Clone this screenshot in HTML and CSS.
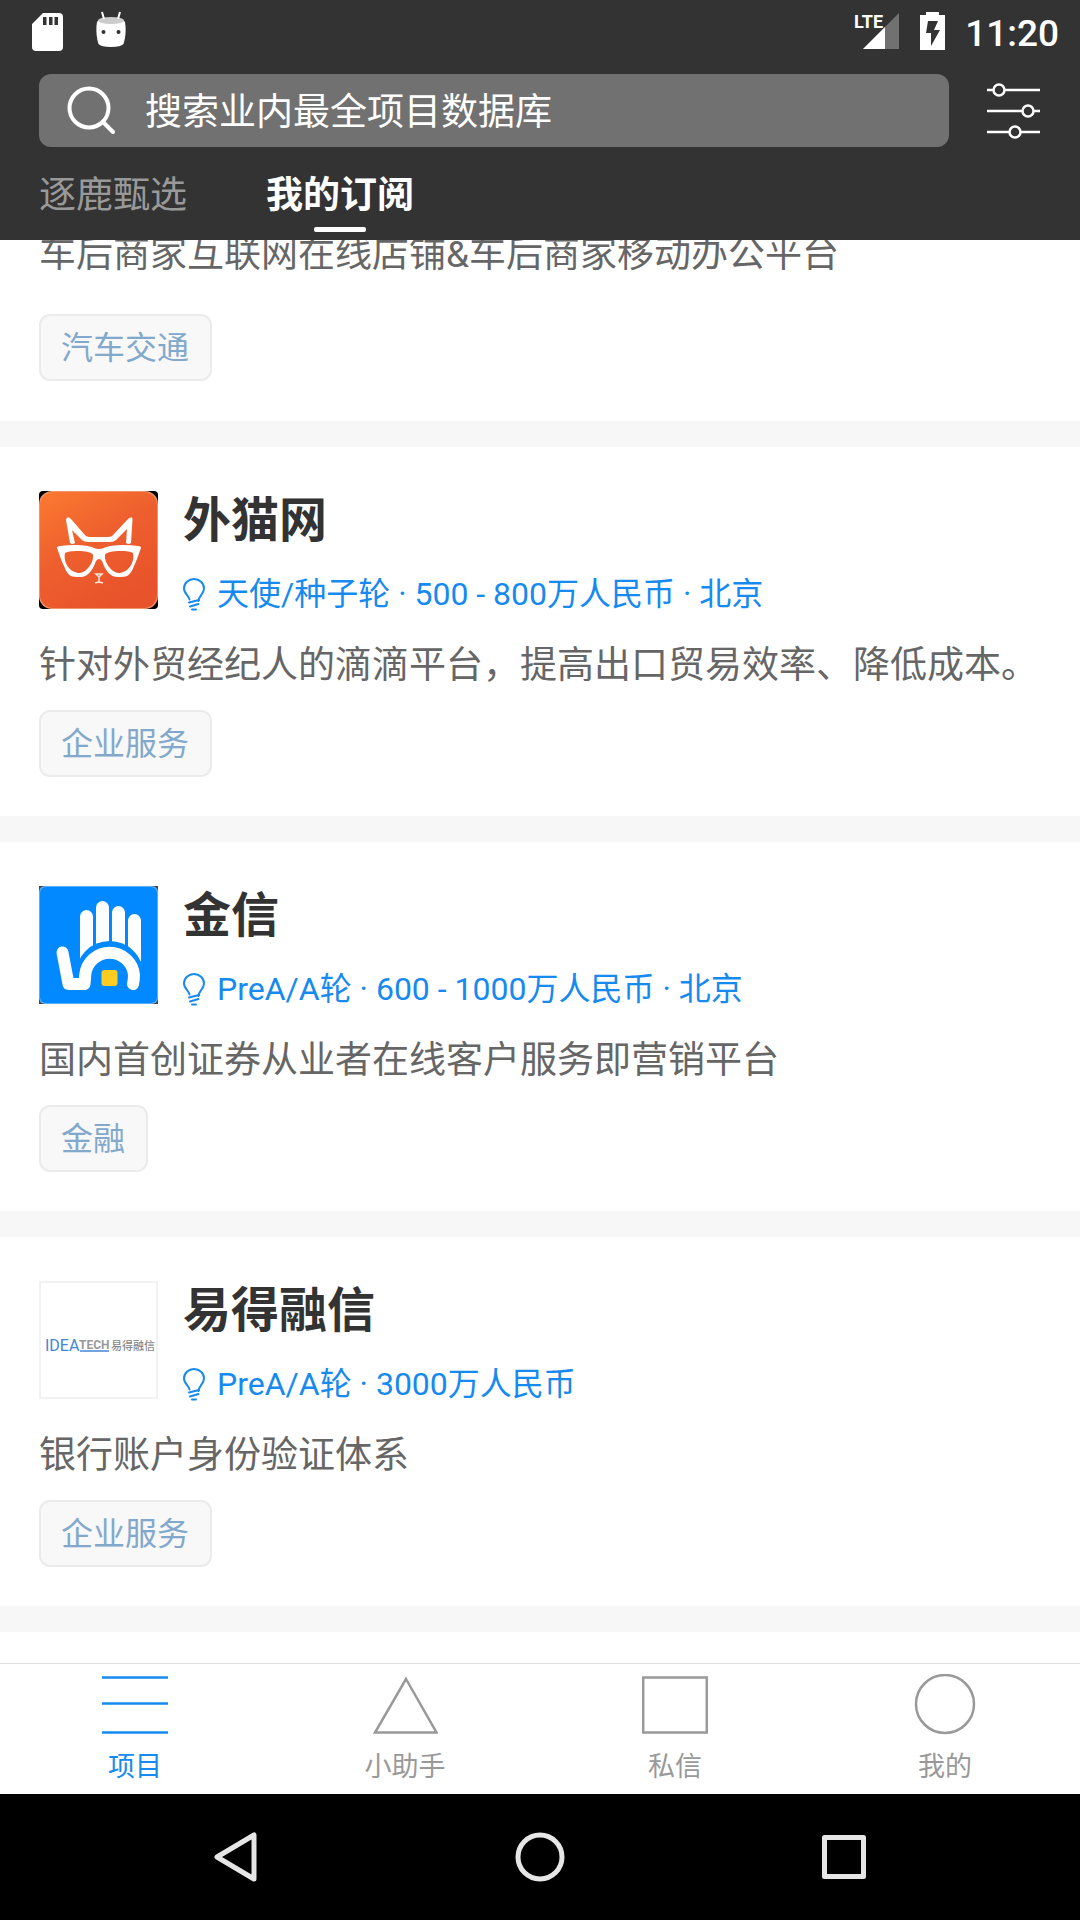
FILE: index.html
```html
<!DOCTYPE html>
<html lang="zh-CN">
<head>
<meta charset="utf-8">
<meta name="viewport" content="width=device-width, initial-scale=1">
<title>我的订阅</title>
<link rel="stylesheet" href="styles.css">
</head>
<body>
<svg class="defs" aria-hidden="true">
  <symbol id="bulb" viewBox="0 0 22 33">
    <g fill="none" stroke="currentColor" stroke-width="2" stroke-linecap="round">
      <path d="M6.500 21.500C6.500 18 1 16 1 10.500A10 9.500 0 0 1 21 10.500C21 16 15.500 18 15.500 23"/>
      <path d="M6 24.500L16 22M7 28.500L15.500 26M9 31.500H13"/>
    </g>
  </symbol>
</svg>
<div class="app">
  <header class="header">
    <div class="status">
      <div class="status-side status-left">
        <svg width="32" height="40" viewBox="0 0 32 40"><path fill="#fff" fill-rule="evenodd" d="M12 2H28a4 4 0 0 1 4 4V36a4 4 0 0 1-4 4H5a4 4 0 0 1-4-4V13ZM12 6V14H15.500V6ZM18 6V14H21.500V6ZM23.500 6V14H27V6Z"/></svg>
        <svg width="32" height="38" viewBox="0 0 32 38"><path fill="#fff" d="M2 11C1 17 1 25 3.500 33Q6 36 16 36T28.500 33C31 25 31 17 30 11Q28 7 16 7T2 11Z"/><ellipse cx="16" cy="9.500" rx="13" ry="3.500" fill="#ccc"/><path d="M7 1L9 8M25 1L23 8" stroke="#fff" stroke-width="2"/><circle cx="8.500" cy="21" r="2" fill="#333"/><circle cx="23.500" cy="21" r="2" fill="#333"/></svg>
      </div>
      <div class="status-side status-right">
        <svg width="47" height="40" viewBox="0 0 47 40"><path fill="#717171" d="M46 2V38H10Z"/><path fill="#fff" d="M32 16V38H10Z"/><text x="1" y="17" class="lte">LTE</text></svg>
        <svg width="25" height="40" viewBox="0 0 25 40"><path fill="#fff" fill-rule="evenodd" d="M6 1H19V4H25V39H0V4H6ZM8 10L6 22H11V35L20 19H14L18 10Z"/></svg>
        <time class="clock">11:20</time>
      </div>
    </div>
    <form class="search-row" onsubmit="return false">
      <label class="search">
        <svg width="50" height="50" viewBox="0 0 50 50"><g fill="none" stroke="#fff" stroke-width="4" stroke-linecap="round"><circle cx="23" cy="22" r="19.500"/><path d="M37 36L47 46"/></g></svg>
        <input type="search" placeholder="搜索业内最全项目数据库" aria-label="搜索项目">
      </label>
      <button type="button" class="filter" aria-label="筛选">
        <svg width="54" height="56" viewBox="0 0 54 56"><g fill="#333" stroke="#fff" stroke-width="2.500"><path d="M0 7H53M0 28H53M0 49H53"/><circle cx="12" cy="7" r="5.500"/><circle cx="41" cy="28" r="5.500"/><circle cx="28" cy="49" r="5.500"/></g></svg>
      </button>
    </form>
    <nav class="tabs">
      <button type="button" class="tab">逐鹿甄选</button>
      <button type="button" class="tab tab-active">我的订阅</button>
    </nav>
  </header>

  <main class="feed">
    <article class="card card-scrolled">
      <p class="desc">车后商家互联网在线店铺&amp;车后商家移动办公平台</p>
      <span class="tag">汽车交通</span>
    </article>

    <article class="card">
      <div class="card-head">
        <svg class="logo" viewBox="0 0 119 118">
          <defs><linearGradient id="orange" x1="0" y1="0" x2=".6" y2="1"><stop offset="0" stop-color="#fb7a30"/><stop offset=".5" stop-color="#ee5f2e"/><stop offset="1" stop-color="#e8532b"/></linearGradient></defs>
          <rect width="119" height="118" rx="4" fill="#000"/>
          <rect width="119" height="118" rx="13" fill="#f0946c"/>
          <rect x="1" y="1" width="117" height="116" rx="13" fill="url(#orange)"/>
          <path fill="#fff" fill-rule="evenodd" d="M31 52L27 29Q28 24 32 28L45 43Q47 46 51 46H69Q73 46 75 43L89 28Q94 24 93.500 29L92 52Q89.500 54 87 52L88 38L77 49Q75 51 71 51H49Q45 51 43 49L33 39L36 52Q33.500 54 31 52Z"/>
          <path fill="#fff" fill-rule="evenodd" d="M18 57Q18 55 21 55C34 53 50 54 55 57Q60 59 65 57C70 54 86 53 99 55Q102 55 102 57C99 65 98 69 95 75C91 86 87 86 79 86C70 86 66 78 63 70Q60 66 57 70C54 78 50 86 41 86C33 86 29 86 25 75C22 69 21 65 18 57ZM26 62C24 72 31 82 41 82C48 81 55 71 54 64C53 59 30 59 26 62ZM94 62C96 72 89 82 79 82C72 81 65 71 66 64C67 59 90 59 94 62Z"/>
          <path fill="none" stroke="#ffe6dc" stroke-width="1.500" d="M57 83L60 86L63 83ZM60 86V91M56 92L60 91L64 92"/>
        </svg>
        <div class="card-info">
          <h2 class="name">外猫网</h2>
          <p class="meta"><svg class="bulb"><use href="#bulb"/></svg>天使/种子轮 · 500 - 800万人民币 · 北京</p>
        </div>
      </div>
      <p class="desc">针对外贸经纪人的滴滴平台，提高出口贸易效率、降低成本。</p>
      <span class="tag">企业服务</span>
    </article>

    <article class="card">
      <div class="card-head">
        <svg class="logo" viewBox="0 0 119 118">
          <rect width="119" height="118" fill="#444"/>
          <rect width="119" height="118" rx="6" fill="#5aaef8"/>
          <rect x="1" y="1" width="117" height="116" rx="6" fill="#0389ff"/>
          <g fill="#fff"><rect x="41" y="24" width="13" height="55" rx="6.500"/><rect x="57" y="15" width="13" height="60" rx="6.500"/><rect x="73" y="20" width="13" height="60" rx="6.500"/><path d="M89 34.500a6.500 6.500 0 0 1 13 0V76L89 70Z"/></g>
          <path fill="#0389ff" d="M36.600 89a34 34 0 0 1 68 0v18h-68Z"/>
          <path fill="none" stroke="#fff" stroke-width="12" stroke-linecap="round" stroke-linejoin="round" d="M23.500 66.500L29.500 98H45.500Q46 94 46.200 89A24.500 24.500 0 0 1 95 89Q95 94 94 98"/>
          <rect x="62.500" y="84" width="16" height="16" rx="3" fill="#fccc20"/>
        </svg>
        <div class="card-info">
          <h2 class="name">金信</h2>
          <p class="meta"><svg class="bulb"><use href="#bulb"/></svg>PreA/A轮 · 600 - 1000万人民币 · 北京</p>
        </div>
      </div>
      <p class="desc">国内首创证券从业者在线客户服务即营销平台</p>
      <span class="tag">金融</span>
    </article>

    <article class="card">
      <div class="card-head">
        <svg class="logo" viewBox="0 0 119 118">
          <rect x="1" y="1" width="117" height="116" fill="#fff" stroke="#f2f2f2" stroke-width="2"/>
          <text x="6" y="70" class="brand-idea">IDEA</text>
          <text x="40" y="68" class="brand-tech">TECH</text>
          <path d="M41 70H70" stroke="#4585d6" stroke-width="1.500"/>
          <text x="72" y="69" class="brand-cn">易得融信</text>
        </svg>
        <div class="card-info">
          <h2 class="name">易得融信</h2>
          <p class="meta"><svg class="bulb"><use href="#bulb"/></svg>PreA/A轮 · 3000万人民币</p>
        </div>
      </div>
      <p class="desc">银行账户身份验证体系</p>
      <span class="tag">企业服务</span>
    </article>
  </main>

  <nav class="tabbar">
    <a href="#projects" class="tabbar-item tabbar-active"><svg width="66" height="62" viewBox="0 0 66 62"><path d="M0 3.500H66M0 29.500H66M0 58.500H66"/></svg>项目</a>
    <a href="#assistant" class="tabbar-item"><svg width="66" height="62" viewBox="0 0 66 62"><path d="M34 5L64.500 58.500H3Z"/></svg>小助手</a>
    <a href="#messages" class="tabbar-item"><svg width="66" height="62" viewBox="0 0 66 62"><path d="M1.200 3.500H64.800V58.500H1.200Z"/></svg>私信</a>
    <a href="#me" class="tabbar-item"><svg width="66" height="62" viewBox="0 0 66 62"><ellipse cx="33" cy="30" rx="29" ry="29"/></svg>我的</a>
  </nav>

  <nav class="sysnav">
    <button type="button" aria-label="返回"><svg width="52" height="52" viewBox="0 0 52 52"><path d="M44 4V48L7 26Z"/></svg></button>
    <button type="button" aria-label="主屏幕"><svg width="52" height="52" viewBox="0 0 52 52"><circle cx="26" cy="26" r="22"/></svg></button>
    <button type="button" aria-label="最近任务"><svg width="52" height="52" viewBox="0 0 52 52"><path d="M6.500 6.500H45.500V45.500H6.500Z"/></svg></button>
  </nav>
</div>
</body>
</html>
```
FILE: styles.css
```css
* {
  box-sizing: border-box;
  margin: 0;
  padding: 0;
}

body {
  font-family: Roboto, "Noto Sans CJK SC", sans-serif;
  background: #fff;
  color: #333;
}

button,
input {
  font: inherit;
  color: inherit;
  background: none;
  border: 0;
}

svg {
  display: block;
  flex: none;
}

.defs {
  display: none;
}

.app {
  display: flex;
  flex-direction: column;
  height: 100vh;
}

/* Header */
.header {
  flex: none;
  background: #333;
  color: #fff;
}

.status {
  display: flex;
  justify-content: space-between;
  height: 74px;
  padding: 11px 21px 0 31px;
}

.status-side {
  display: flex;
  align-items: flex-start;
}

.status-left {
  gap: 32px;
}

.status-right {
  gap: 20px;
}

.lte {
  font: 700 18px "Liberation Sans Narrow", Roboto, sans-serif;
  fill: #fff;
}

.clock {
  font-size: 37px;
  font-weight: 500;
  line-height: 46px;
}

.search-row {
  display: flex;
  align-items: center;
  gap: 38px;
  padding: 0 39px;
}

.search {
  display: flex;
  flex: 1;
  align-items: center;
  gap: 29px;
  height: 73px;
  padding: 0 27px;
  border-radius: 12px;
  background: #717171;
}

.search input {
  flex: 1;
  min-width: 0;
  padding-top: 4px;
  font-size: 37px;
  outline: 0;
}

.search input::placeholder {
  color: #fff;
  opacity: 1;
}

.tabs {
  display: flex;
  gap: 79px;
  height: 93px;
  padding: 22px 39px 8px;
}

.tab {
  display: flex;
  flex-direction: column;
  align-items: center;
  justify-content: space-between;
  font-size: 37px;
  line-height: 54px;
  color: #999;
}

.tab-active {
  font-weight: 700;
  color: #fff;
}

.tab-active::after {
  content: "";
  width: 52px;
  height: 5px;
  border-radius: 2px;
  background: #fff;
}

/* Project feed */
.feed {
  flex: 1;
  min-height: 0;
  overflow: hidden;
}

.card {
  padding: 44px 39px 39px;
  border-bottom: 26px solid #f7f7f7;
}

.card-scrolled {
  margin-top: -12px;
  padding-top: 0;
  padding-bottom: 40px;
}

.card-head {
  display: flex;
  gap: 25px;
  margin-bottom: 30px;
}

.logo {
  width: 119px;
  height: 118px;
}

.card-info {
  display: flex;
  flex-direction: column;
  justify-content: space-between;
}

.name {
  font-size: 48px;
  line-height: 60px;
}

.meta {
  display: flex;
  align-items: center;
  gap: 12px;
  height: 30px;
  font-size: 32px;
  line-height: 30px;
  color: #178af0;
}

.bulb {
  width: 22px;
  height: 33px;
}

.desc {
  margin-bottom: 17px;
  font-size: 37px;
  line-height: 54px;
  color: #666;
}

.card-scrolled .desc {
  margin-bottom: 32px;
}

.tag {
  display: block;
  width: fit-content;
  padding: 2px 21px 0 20px;
  border: 2px solid #ebebeb;
  border-radius: 11px;
  background: #f8f8f8;
  font-size: 32px;
  line-height: 61px;
  color: #82a9cc;
}

.brand-idea {
  font: 16px Roboto, sans-serif;
  fill: #4585d6;
}

.brand-tech {
  font: 700 12px Roboto, sans-serif;
  fill: #999;
}

.brand-cn {
  font: 500 11px "Noto Sans CJK SC", sans-serif;
  fill: #888;
}

/* App tab bar */
.tabbar {
  display: flex;
  flex: none;
  height: 131px;
  border-top: 1px solid #e0e0e0;
  background: #fff;
}

.tabbar-item {
  display: flex;
  flex: 1;
  flex-direction: column;
  align-items: center;
  gap: 13px;
  padding-top: 10px;
  font-size: 27px;
  line-height: 36px;
  color: #999;
  text-decoration: none;
}

.tabbar-item svg {
  fill: none;
  stroke: currentColor;
  stroke-width: 2.5px;
}

.tabbar-active {
  color: #178af0;
}

/* System navigation */
.sysnav {
  display: grid;
  grid-template-columns: repeat(3, 304px);
  flex: none;
  justify-content: center;
  align-items: center;
  justify-items: center;
  height: 126px;
  background: #000;
}

.sysnav svg {
  fill: none;
  stroke: #e6e6e6;
  stroke-width: 5px;
  stroke-linejoin: round;
}
```
